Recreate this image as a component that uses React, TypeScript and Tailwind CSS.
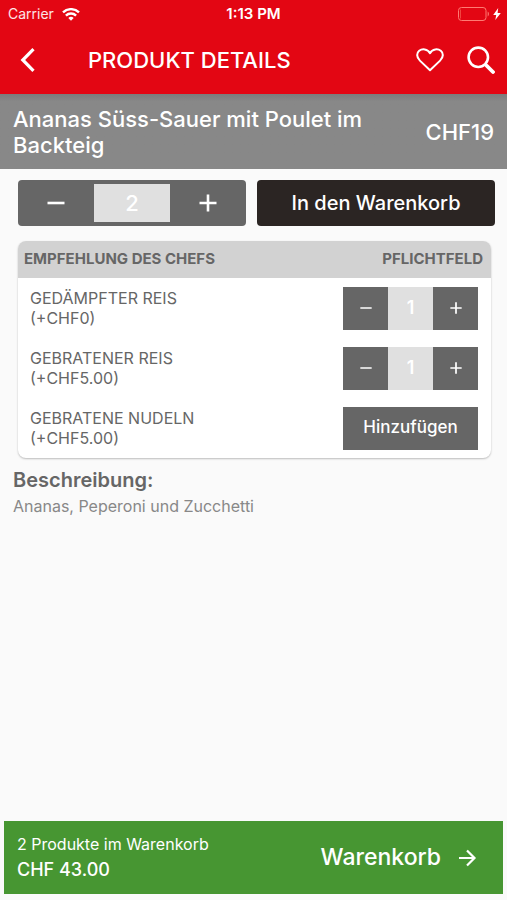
import React, { useState } from "react";

interface Option {
  id: string;
  name: string;
  price: string;
  quantity: number;
}

const initialOptions: Option[] = [
  { id: "steamed", name: "GEDÄMPFTER REIS", price: "(+CHF0)", quantity: 1 },
  { id: "fried", name: "GEBRATENER REIS", price: "(+CHF5.00)", quantity: 1 },
  { id: "noodles", name: "GEBRATENE NUDELN", price: "(+CHF5.00)", quantity: 0 },
];

const MinusIcon: React.FC<{ className: string }> = ({ className }) => (
  <svg viewBox="0 0 24 24" fill="currentColor" className={className} aria-hidden="true">
    <path d="M3.5 10.7h17v2.6h-17z" />
  </svg>
);

const PlusIcon: React.FC<{ className: string }> = ({ className }) => (
  <svg viewBox="0 0 24 24" fill="currentColor" className={className} aria-hidden="true">
    <path d="M10.7 3.5h2.6v7.2h7.2v2.6h-7.2v7.2h-2.6v-7.2H3.5v-2.6h7.2z" />
  </svg>
);

const StatusBar: React.FC = () => (
  <div className="grid h-7 grid-cols-3 items-center leading-5">
    <div className="flex items-center gap-2 pl-2">
      <span className="text-sm text-white/90">Carrier</span>
      <svg viewBox="0 0 18 13" className="h-[13px] w-[18px]" fill="none" stroke="white" strokeWidth="2.4" aria-hidden="true">
        <path d="M1 4.4a11.5 11.5 0 0 1 16 0" />
        <path d="M3.9 7.6a7.3 7.3 0 0 1 10.2 0" />
        <path d="M6.3 9.9a4 4 0 0 1 5.4 0L9 12.7z" fill="white" stroke="none" />
      </svg>
    </div>
    <span className="text-center text-[15px] font-semibold">1:13 PM</span>
    <div className="flex items-center justify-end gap-[3px] pr-[6px]">
      <svg viewBox="0 0 32 14" className="h-[14px] w-8" fill="none" aria-hidden="true">
        <rect x="0.5" y="0.5" width="27.5" height="13" rx="3" stroke="#ff7a72" />
        <path d="M2.5 2.5v9" stroke="#f0453f" />
        <path d="M29.7 4.6c1.6.7 1.6 4.1 0 4.8z" fill="#ff7a72" />
      </svg>
      <svg viewBox="0 0 8 12" className="h-3 w-2" fill="white" aria-hidden="true">
        <path d="M5.2 0 .2 6.9h3L2.3 12l5.5-7.1H4.6z" />
      </svg>
    </div>
  </div>
);

const Header: React.FC = () => (
  <header className="bg-[#e30613] text-white">
    <StatusBar />
    <div className="flex h-[66px] items-center pb-[2px] pl-4 pr-3">
      <button type="button" aria-label="Zurück" className="w-[72px]">
        <svg viewBox="0 0 24 24" className="h-6 w-6" fill="none" stroke="currentColor" strokeWidth="3.2" aria-hidden="true">
          <path d="M17.5 1.2 6.8 12l10.700 10.800" />
        </svg>
      </button>
      <h1 className="flex-1 text-[22px] font-medium leading-7">PRODUKT DETAILS</h1>
      <div className="flex items-center gap-[23px]">
        <button type="button" aria-label="Favorit">
          <svg viewBox="0 0 28 24" className="h-6 w-7" fill="none" stroke="currentColor" strokeWidth="2" strokeLinejoin="round" aria-hidden="true">
            <path d="M14 22.3 3.9 12.6C.2 9 .6 4.900 3.200 2.800 6.100.5 11.600.8 14 5.200 16.400.8 21.900.5 24.800 2.800c2.600 2.100 3 6.200-.7 9.800z" />
          </svg>
        </button>
        <button type="button" aria-label="Suchen">
          <svg viewBox="0 0 28 28" className="h-7 w-7" fill="none" stroke="currentColor" aria-hidden="true">
            <circle cx="11.3" cy="11.3" r="9.7" strokeWidth="2.6" />
            <path d="m18 18 2.5 2.5" strokeWidth="2.6" />
            <path d="m20 20 6 6" strokeWidth="3.8" strokeLinecap="round" />
          </svg>
        </button>
      </div>
    </div>
  </header>
);

interface StepperProps {
  value: number;
  onChange: (value: number) => void;
}

const OptionStepper: React.FC<StepperProps> = ({ value, onChange }) => (
  <div className="grid h-[43px] w-[135px] grid-cols-3 text-white">
    <button
      type="button"
      aria-label="Weniger"
      onClick={() => onChange(Math.max(0, value - 1))}
      className="flex items-center justify-center bg-[#666]"
    >
      <MinusIcon className="h-4 w-4" />
    </button>
    <output className="flex items-center justify-center bg-[#e0e0e0] text-lg font-semibold">{value}</output>
    <button
      type="button"
      aria-label="Mehr"
      onClick={() => onChange(value + 1)}
      className="flex items-center justify-center bg-[#666]"
    >
      <PlusIcon className="h-4 w-4" />
    </button>
  </div>
);

export default function App() {
  const [quantity, setQuantity] = useState(2);
  const [options, setOptions] = useState(initialOptions);

  const setOptionQuantity = (id: string, value: number) =>
    setOptions(options.map((option) => (option.id === id ? { ...option, quantity: value } : option)));

  return (
    <div className="flex min-h-screen flex-col bg-[#fafafa] font-['Inter','Liberation_Sans',sans-serif] text-[#666]">
      <Header />

      <section className="flex items-center justify-between bg-[#888] bg-linear-to-b from-[#7c7c7c] to-[#888] to-10% px-[13px] pb-[11px] pt-3 text-white">
        <h2 className="max-w-[380px] text-[22px] font-medium leading-[26px]">
          Ananas Süss-Sauer mit Poulet im Backteig
        </h2>
        <span className="text-[22px] font-medium leading-[26px]">CHF19</span>
      </section>

      <main className="flex-1">
        <div className="flex gap-[11px] pl-[18px] pr-3 pt-[11px] text-white">
          <div className="grid h-[46px] w-[228px] grid-cols-3 rounded bg-[#666]">
            <button
              type="button"
              aria-label="Weniger"
              onClick={() => setQuantity(Math.max(1, quantity - 1))}
              className="flex items-center justify-center"
            >
              <MinusIcon className="h-6 w-6" />
            </button>
            <output className="my-1 flex items-center justify-center bg-[#e0e0e0] text-[22px] font-medium">
              {quantity}
            </output>
            <button
              type="button"
              aria-label="Mehr"
              onClick={() => setQuantity(quantity + 1)}
              className="flex items-center justify-center"
            >
              <PlusIcon className="h-6 w-6" />
            </button>
          </div>
          <button type="button" className="h-[46px] flex-1 rounded bg-[#2b2523] text-xl font-medium">
            In den Warenkorb
          </button>
        </div>

        <section className="ml-[18px] mr-4 mt-[15px] overflow-hidden rounded-lg bg-white shadow-[0_1px_2px_rgba(0,0,0,0.25)]">
          <div className="flex h-[37px] items-center justify-between bg-[#d2d2d2] pl-[6px] pr-2 text-[15px] font-bold">
            <h3>EMPFEHLUNG DES CHEFS</h3>
            <span>PFLICHTFELD</span>
          </div>
          <ul>
            {options.map((option) => (
              <li key={option.id} className="flex h-[60px] items-center justify-between pl-3 pr-[13px]">
                <div className="text-base leading-5">
                  <p>{option.name}</p>
                  <p>{option.price}</p>
                </div>
                {option.quantity > 0 ? (
                  <OptionStepper
                    value={option.quantity}
                    onChange={(value) => setOptionQuantity(option.id, value)}
                  />
                ) : (
                  <button
                    type="button"
                    onClick={() => setOptionQuantity(option.id, 1)}
                    className="h-[43px] w-[135px] bg-[#666] text-[17px] font-medium text-white"
                  >
                    Hinzufügen
                  </button>
                )}
              </li>
            ))}
          </ul>
        </section>

        <section className="px-[13px] pt-2">
          <h3 className="text-xl font-semibold leading-7">Beschreibung:</h3>
          <p className="text-base leading-6 text-[#888]">Ananas, Peperoni und Zucchetti</p>
        </section>
      </main>

      <footer className="px-1 pb-[6px]">
        <a href="#warenkorb" className="flex h-[73px] items-center justify-between bg-[#479632] pl-[13px] pr-[26px] text-white">
          <div>
            <p className="text-base leading-6">2 Produkte im Warenkorb</p>
            <p className="text-lg font-medium leading-7">CHF 43.00</p>
          </div>
          <div className="flex items-center gap-4 text-[23px] font-medium">
            <span>Warenkorb</span>
            <svg viewBox="0 0 20 20" className="h-5 w-5" fill="none" stroke="currentColor" strokeWidth="2.2" aria-hidden="true">
              <path d="M2 10h15M10 2.5l7.5 7.5-7.5 7.5" />
            </svg>
          </div>
        </a>
      </footer>
    </div>
  );
}
